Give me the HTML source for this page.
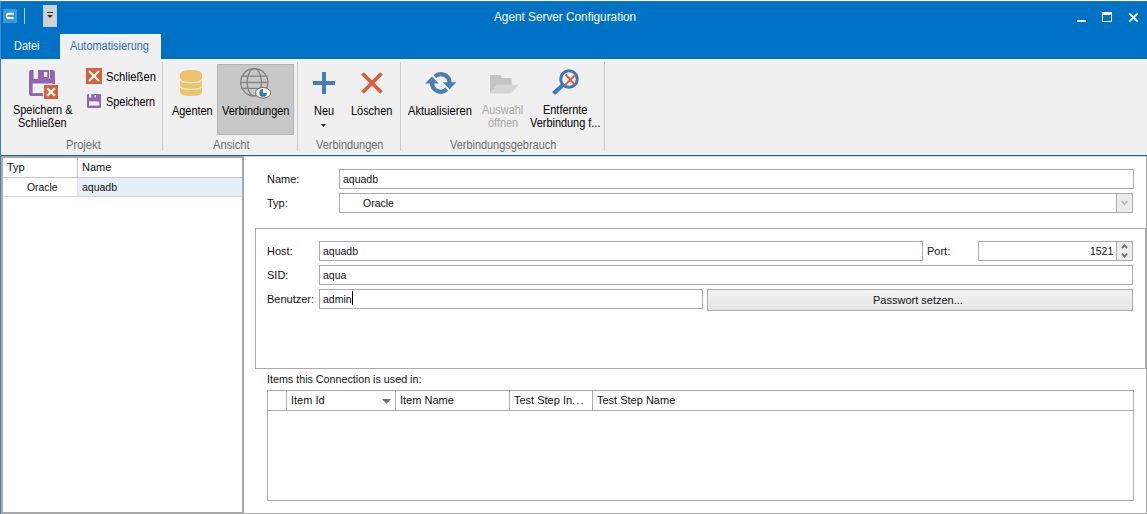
<!DOCTYPE html>
<html><head><meta charset="utf-8">
<style>
*{margin:0;padding:0;box-sizing:border-box}
html,body{width:1147px;height:514px;overflow:hidden;background:#fff;font-family:"Liberation Sans",sans-serif}
.a{position:absolute}
.t{position:absolute;font-size:11px;line-height:13px;white-space:nowrap;color:#111}
.r{position:absolute;font-size:12px;line-height:14px;white-space:nowrap;transform:scaleX(0.91);transform-origin:0 0}
.box{position:absolute;border:1px solid #ababab;background:#fff}
svg{position:absolute;overflow:visible}
</style></head><body>
<div class="a" style="left:0;top:0;width:1147px;height:1px;background:#eafcff"></div>
<div class="a" style="left:0;top:1px;width:1147px;height:58px;background:#0072c6"></div>

<div class="a" style="left:0;top:1px;width:1147px;height:1px;background:#3470a6"></div>
<div class="a" style="left:0;top:2px;width:1147px;height:1px;background:#0b6cba"></div>
<div class="a" style="left:3px;top:9px;width:14px;height:14px;background:#3a9ad9"></div>
<svg style="left:3px;top:9px" width="14" height="14"><path d="M11 4.8 H5.9 A2.1 2.1 0 0 0 5.9 9 H10.6" fill="none" stroke="#fff" stroke-width="2"/></svg>
<div class="a" style="left:24px;top:8px;width:1px;height:16px;background:#a8d8ff"></div>
<div class="a" style="left:43px;top:5px;width:14px;height:22px;background:#d0d0d0;border:1px solid #a9d6fb"></div>
<svg style="left:43px;top:5px" width="14" height="22"><rect x="4" y="7" width="6" height="1" fill="#333"/><path d="M4 10 H10 L7 13 Z" fill="#333"/></svg>
<div class="a" style="left:494px;top:10px;font-size:12px;line-height:14px;color:#fff;white-space:nowrap;transform:scaleX(0.982);transform-origin:0 0">Agent Server Configuration</div>
<div class="a" style="left:1077px;top:20px;width:9px;height:2px;background:#fff"></div>
<div class="a" style="left:1102px;top:12px;width:10px;height:10px;border:1px solid #fff;border-top-width:3px"></div>
<svg style="left:1129px;top:13px" width="10" height="10"><path d="M0.3 0.3 L8.7 8.7 M8.7 0.3 L0.3 8.7" stroke="#fff" stroke-width="1.9"/></svg>
<div class="r" style="left:14px;top:39px;color:#fff;">Datei</div>
<div class="a" style="left:60px;top:34px;width:101px;height:26px;background:#f0f0f0;border:1px solid #dff8fe;border-bottom:0;z-index:1"></div>
<div class="r" style="left:70px;top:39px;color:#2a6fb5;z-index:2">Automatisierung</div>
<div class="a" style="left:1px;top:59px;width:1146px;height:95px;background:#f0f0f0;border-top:1px solid #dcfbfe;border-left:1px solid #dcfbfe"></div>
<div class="a" style="left:1px;top:153px;width:1146px;height:1px;background:#e8f1f8"></div>
<div class="a" style="left:0;top:58px;width:1147px;height:1px;background:#1765a6"></div>
<div class="a" style="left:161px;top:34px;width:1px;height:25px;background:#1765a6"></div>
<div class="a" style="left:161px;top:60px;width:986px;height:1px;background:#e7f2f9"></div>
<div class="a" style="left:2px;top:60px;width:58px;height:1px;background:#e7f2f9"></div>
<div class="a" style="left:1px;top:154px;width:1146px;height:1px;background:#dcfbfe"></div>
<div class="a" style="left:1px;top:155px;width:1146px;height:1px;background:#2d5b80"></div>
<div class="a" style="left:162px;top:62px;width:1px;height:89px;background:#cbcbcb"></div>
<div class="a" style="left:297px;top:62px;width:1px;height:89px;background:#cbcbcb"></div>
<div class="a" style="left:400px;top:62px;width:1px;height:89px;background:#cbcbcb"></div>
<div class="a" style="left:604px;top:62px;width:1px;height:89px;background:#cbcbcb"></div>
<div class="r" style="left:66px;top:138px;color:#6c6c6c;transform:scaleX(.93)">Projekt</div>
<div class="r" style="left:213px;top:138px;color:#6c6c6c;transform:scaleX(.93)">Ansicht</div>
<div class="r" style="left:316px;top:138px;color:#6c6c6c;">Verbindungen</div>
<div class="r" style="left:450px;top:138px;color:#6c6c6c;">Verbindungsgebrauch</div>
<!-- Speichern & Schliessen big -->
<svg style="left:29px;top:70px" width="30" height="30">
<rect x="0" y="0" width="26" height="26" rx="2.2" fill="#9264b2"/>
<rect x="4.6" y="0" width="4.4" height="9" fill="#f0f0f0"/>
<rect x="20" y="0" width="0.9" height="9" fill="#e8dff0"/>
<rect x="15" y="2" width="3.2" height="5" fill="#f6f2fa"/>
<rect x="3.6" y="13.5" width="19.9" height="9.6" fill="#f0f0f0"/>
<rect x="14" y="14" width="16" height="16" fill="#fbf5f2"/>
<rect x="15" y="15" width="14" height="14" fill="#d9603b"/>
<path d="M18.2 18.2 L25.8 25.8 M25.8 18.2 L18.2 25.8" stroke="#fff" stroke-width="2.3"/>
</svg>
<!-- Schliessen small -->
<svg style="left:86px;top:68px" width="16" height="16">
<rect x="0" y="0" width="16" height="16" fill="#d9603b"/>
<path d="M3 3 L13 13 M13 3 L3 13" stroke="#fff" stroke-width="2.2"/>
</svg>
<!-- Speichern small -->
<svg style="left:87px;top:94px" width="14" height="14">
<rect x="0" y="0" width="14" height="14" rx="1" fill="#9264b2"/>
<rect x="2" y="0" width="2.3" height="3.6" fill="#f0f0f0"/>
<rect x="7.6" y="1" width="1.4" height="2.4" fill="#f0f0f0"/>
<rect x="2" y="7.4" width="10.3" height="4.2" fill="#f0f0f0"/>
</svg>

<!-- Agenten -->
<svg style="left:180px;top:70px" width="22" height="26">
<path d="M0 4.5 Q0 0 11 0 Q22 0 22 4.5 V21.5 Q22 26 11 26 Q0 26 0 21.5 Z" fill="#edc36e"/>
<path d="M0 9 Q0 12.6 11 12.6 Q22 12.6 22 9" fill="none" stroke="#f7eedb" stroke-width="1.3"/>
<path d="M0 15.8 Q0 19.4 11 19.4 Q22 19.4 22 15.8" fill="none" stroke="#f7eedb" stroke-width="1.3"/>
</svg>

<!-- Verbindungen pressed -->
<div class="a" style="left:217px;top:64px;width:77px;height:71px;background:#c8c8c8;border:1px solid #b4b4b4"></div>
<svg style="left:240px;top:68px" width="32" height="32">
<g fill="none" stroke="#828282" stroke-width="1.3">
<circle cx="14.3" cy="14.3" r="13.6"/>
<ellipse cx="14.3" cy="14.3" rx="7.2" ry="13.6"/>
<path d="M1.2 8.2 H27.4 M0.7 14.5 H27.9 M1.2 20.4 H27.4"/>
</g>
<ellipse cx="23.1" cy="24.8" rx="7.6" ry="5.3" fill="#fff" stroke="#6a6a6a" stroke-width="1"/>
<path d="M23.1 24.9 H27 A3.9 3.9 0 1 1 23.1 21 Z" fill="#3f79b9"/>
</svg>

<!-- Neu -->
<svg style="left:313px;top:72px" width="22" height="22">
<path d="M11 0 V22 M0 11 H22" stroke="#4a7db6" stroke-width="4"/>
</svg>
<svg style="left:321px;top:124px" width="6" height="4"><path d="M0 0 H5 L2.5 3 Z" fill="#222"/></svg>

<!-- Loeschen -->
<svg style="left:361px;top:72px" width="22" height="22">
<path d="M1.5 1.5 L20.5 20.5 M20.5 1.5 L1.5 20.5" stroke="#d9603e" stroke-width="3.8"/>
</svg>

<!-- Aktualisieren -->
<svg style="left:425px;top:71px" width="32" height="24">
<g fill="none" stroke="#4a7db6" stroke-width="4.2">
<path d="M9.6 5.7 A8.8 8.8 0 0 1 24.6 11.9"/>
<path d="M22 18.1 A8.8 8.8 0 0 1 7 11.9"/>
</g>
<path d="M0.2 12.5 L7 5.5 L13.8 12.5 Z" fill="#4a7db6"/>
<path d="M17.8 11.2 L31.4 11.2 L24.6 18.2 Z" fill="#4a7db6"/>
<path d="M7.6 3.6 L14.6 12.6 M17 11.2 L24 20.2" stroke="#f0f0f0" stroke-width="1"/>
</svg>

<!-- Auswahl oeffnen -->
<svg style="left:490px;top:75px" width="29" height="20">
<path d="M0 1 Q0 0 1 0 H11 L11.7 3.1 H21.7 V10 H7 L0 18.6 Z" fill="#c4c4c4"/>
<path d="M7.3 9.7 H28.7 L20.8 18.6 H0 Z" fill="#d5d5d5"/>
</svg>

<!-- Entfernte Verbindung -->
<svg style="left:550px;top:67px" width="32" height="31">
<circle cx="19" cy="12" r="8.3" fill="none" stroke="#3f7ab8" stroke-width="3"/>
<path d="M13.2 17.8 L3.5 26.5" stroke="#3f7ab8" stroke-width="4.2"/>
<path d="M15.6 7.5 L24.9 17.9 M24.9 8.3 L15.3 17.9" stroke="#d9623e" stroke-width="2"/>
</svg>
<div class="r" style="left:13px;top:103px;color:#000;">Speichern &amp;</div>
<div class="r" style="left:18px;top:116px;color:#000;">Schließen</div>
<div class="r" style="left:106px;top:70px;color:#000;transform:scaleX(.935)">Schließen</div>
<div class="r" style="left:106px;top:95px;color:#000;">Speichern</div>
<div class="r" style="left:172px;top:104px;color:#000;">Agenten</div>
<div class="r" style="left:222px;top:104px;color:#000;">Verbindungen</div>
<div class="r" style="left:314px;top:104px;color:#000;">Neu</div>
<div class="r" style="left:351px;top:104px;color:#000;">Löschen</div>
<div class="r" style="left:408px;top:104px;color:#000;transform:scaleX(.93)">Aktualisieren</div>
<div class="r" style="left:482px;top:103px;color:#a8a8a8;">Auswahl</div>
<div class="r" style="left:488px;top:116px;color:#a8a8a8;">öffnen</div>
<div class="r" style="left:543px;top:103px;color:#000;">Entfernte</div>
<div class="r" style="left:530px;top:116px;color:#000;">Verbindung f...</div>
<div class="a" style="left:1px;top:156px;width:243px;height:358px;border:2px solid #a9a9a9;background:#fff"></div>
<div class="a" style="left:3px;top:177px;width:239px;height:1px;background:#c4c4c4"></div>
<div class="a" style="left:77px;top:158px;width:1px;height:19px;background:#c4c4c4"></div>
<div class="a" style="left:78px;top:178px;width:164px;height:18px;background:#e4effa"></div>
<div class="a" style="left:77px;top:178px;width:1px;height:18px;background:#dde8f3"></div>
<div class="a" style="left:3px;top:196px;width:239px;height:1px;background:#d6d6d6"></div>
<div class="t" style="left:7px;top:161px">Typ</div>
<div class="t" style="left:82px;top:161px">Name</div>
<div class="t" style="left:27px;top:181px;transform:scaleX(0.94);transform-origin:0 0">Oracle</div>
<div class="t" style="left:82px;top:181px;transform:scaleX(0.955);transform-origin:0 0">aquadb</div>
<div class="a" style="left:244px;top:156px;width:903px;height:358px;border-right:1px solid #a9a9a9;border-bottom:1px solid #a9a9a9;background:#fff"></div>
<div class="t" style="left:267px;top:173px">Name:</div>
<div class="box" style="left:339px;top:169px;width:795px;height:20px"></div>
<div class="t" style="left:343px;top:173px;transform:scaleX(0.955);transform-origin:0 0">aquadb</div>
<div class="t" style="left:267px;top:197px">Typ:</div>
<div class="box" style="left:339px;top:193px;width:794px;height:20px"></div>
<div class="t" style="left:363px;top:197px;transform:scaleX(0.955);transform-origin:0 0">Oracle</div>
<div class="a" style="left:1116px;top:194px;width:16px;height:18px;background:#ececec;border-left:1px solid #ababab"></div>
<svg style="left:1121px;top:200px" width="8" height="6"><path d="M0.6 0.8 L3.5 4.3 L6.4 0.8" fill="none" stroke="#bcbcbc" stroke-width="1.9"/></svg>

<!-- group box -->
<div class="a" style="left:255px;top:228px;width:891px;height:141px;border:1px solid #ababab;background:#fff"></div>
<div class="t" style="left:267px;top:245px">Host:</div>
<div class="box" style="left:319px;top:241px;width:604px;height:20px"></div>
<div class="t" style="left:323px;top:245px;transform:scaleX(0.955);transform-origin:0 0">aquadb</div>
<div class="t" style="left:927px;top:245px">Port:</div>
<div class="box" style="left:978px;top:241px;width:155px;height:20px"></div>
<div class="t" style="left:1090px;top:245px;transform:scaleX(0.95);transform-origin:0 0">1521</div>
<div class="a" style="left:1116px;top:242px;width:16px;height:18px;background:#ececec;border-left:1px solid #ababab"></div>
<svg style="left:1121px;top:243px" width="8" height="16"><path d="M1 5.2 L3.5 2.2 L6 5.2 M1 10.6 L3.5 13.6 L6 10.6" fill="none" stroke="#707070" stroke-width="1.8"/></svg>
<div class="t" style="left:267px;top:269px">SID:</div>
<div class="box" style="left:319px;top:265px;width:814px;height:20px"></div>
<div class="t" style="left:323px;top:269px;transform:scaleX(0.955);transform-origin:0 0">aqua</div>
<div class="t" style="left:267px;top:293px">Benutzer:</div>
<div class="box" style="left:319px;top:289px;width:384px;height:20px"></div>
<div class="t" style="left:323px;top:293px;transform:scaleX(0.955);transform-origin:0 0">admin</div>
<div class="a" style="left:352px;top:291px;width:1px;height:14px;background:#000"></div>
<div class="a" style="left:707px;top:289px;width:426px;height:22px;border:1px solid #acacac;background:linear-gradient(#f2f2f2,#e6e6e6)"></div>
<div class="t" style="left:873px;top:294px">Passwort setzen...</div>

<!-- items grid -->
<div class="t" style="left:267px;top:373px"><span style="display:inline-block;transform:scaleX(0.975);transform-origin:0 0">Items this Connection is used in:</span></div>
<div class="box" style="left:267px;top:390px;width:867px;height:111px"></div>
<div class="a" style="left:268px;top:410px;width:865px;height:1px;background:#ababab"></div>
<div class="a" style="left:286px;top:391px;width:1px;height:19px;background:#ababab"></div>
<div class="a" style="left:395px;top:391px;width:1px;height:19px;background:#ababab"></div>
<div class="a" style="left:509px;top:391px;width:1px;height:19px;background:#ababab"></div>
<div class="a" style="left:592px;top:391px;width:1px;height:19px;background:#ababab"></div>
<div class="t" style="left:291px;top:394px">Item Id</div>
<svg style="left:382px;top:399px" width="9" height="5"><path d="M0 0 H9 L4.5 4.8 Z" fill="#6e6e6e"/></svg>
<div class="t" style="left:400px;top:394px">Item Name</div>
<div class="t" style="left:514px;top:394px">Test Step In<span style="letter-spacing:1.2px">...</span></div>
<div class="t" style="left:597px;top:394px">Test Step Name</div>
<div class="a" style="left:244px;top:156px;width:902px;height:1px;background:#d9dbdd"></div>
<div class="a" style="left:0;top:1px;width:1px;height:58px;background:#3d8fd6"></div>
<div class="a" style="left:0;top:59px;width:1px;height:455px;background:#56799e"></div>
<div class="a" style="left:1px;top:157px;width:1px;height:357px;background:#9fb4c9"></div>
</body></html>
